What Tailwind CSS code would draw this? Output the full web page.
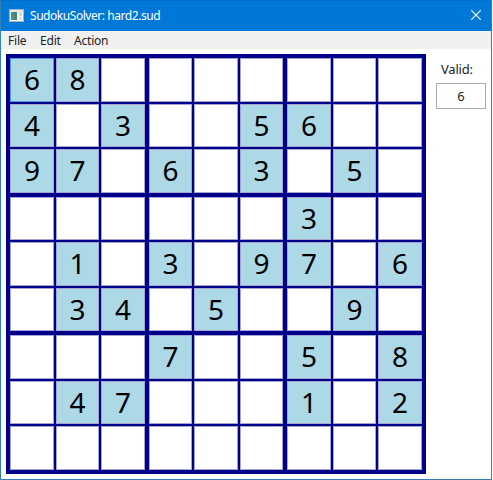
<!DOCTYPE html>
<html lang="en">
<head>
<meta charset="utf-8">
<title>SudokuSolver</title>
<script src="https://cdn.jsdelivr.net/npm/@tailwindcss/browser@4"></script>
</head>
<body class="bg-white font-['Noto_Sans','Open_Sans',sans-serif] text-[12px] text-[#222]">
<div class="w-[492px] h-[480px] border border-[#3480b4] border-t-[#0070c8] flex flex-col overflow-hidden">
  <header class="-mx-px h-[30px] shrink-0 bg-[#0078d7] flex items-center pl-[9px] pr-[11px] text-white">
    <svg class="w-[15px] h-[13px] mb-[2px]" viewBox="0 0 15 13">
      <rect width="15" height="13" fill="#a8b5bb"/>
      <rect x="1" y="1" width="13" height="11" fill="#f5f5f2"/>
      <rect x="1" y="1" width="13" height="1.5" fill="#dce4e6"/>
      <rect x="2" y="3" width="6" height="8" fill="#438477"/>
      <rect x="2" y="3" width="3" height="8" fill="#568b94"/>
      <rect x="10" y="3" width="3" height="4" fill="#d4d8d6"/>
      <rect x="10" y="8" width="3" height="3" fill="#e0e3df"/>
    </svg>
    <h1 class="ml-[6px] tracking-[-0.45px] whitespace-nowrap">SudokuSolver: hard2.sud</h1>
    <svg class="ml-auto mb-[2px] w-[10px] h-[10px]" viewBox="0 0 10 10" fill="none" stroke="white" stroke-width="1.1"><path d="M.3 .3 9.7 9.7M9.7 .3 .3 9.7"/></svg>
  </header>
  <nav class="h-[18px] shrink-0 bg-[#f0f0f0] flex items-center pl-[7px] pt-[2px] tracking-[-0.2px]">
    <span class="w-8">File</span><span class="w-[34px]">Edit</span><span>Action</span>
  </nav>
  <main class="flex pl-[5px] pt-[5px]">
    <div id="board" class="w-[420px] h-[420px] shrink-0 bg-[#00008b] border-4 border-[#00008b] grid grid-cols-[44px_2px_43px_2px_44px_4px_43px_2px_44px_2px_43px_4px_44px_2px_43px_2px_44px] grid-rows-[44px_2px_43px_2px_44px_4px_43px_2px_44px_2px_43px_4px_44px_2px_43px_2px_44px]"></div>
    <aside class="ml-[10px] w-[50px] flex flex-col">
      <label class="mt-[6px] pl-[5px] leading-[18px] text-[13px] tracking-[-0.2px]">Valid:</label>
      <div class="mt-[5px] h-[26px] border border-[#ababab] flex items-center justify-center pt-[2px] text-[13px]">6</div>
    </aside>
  </main>
</div>
<script>
const rows = ["68.......", "4.3..56..", "97.6.3.5.", "......3..", ".1.3.97.6", ".34.5..9.", "...7..5.8", ".47...1.2", "........."];
const board = document.getElementById("board");
rows.forEach((row, r) => [...row].forEach((v, c) => {
  const cell = document.createElement("div");
  cell.className = "flex items-center justify-center border pb-[2px] text-[28px] leading-none text-black " +
    (v === "." ? "bg-white " : "bg-[#add8e6] ") +
    (r === 0 && c === 0 ? "border-[#569de5]" : "border-[#a5a5cf]");
  cell.style.gridArea = `${2 * r + 1} / ${2 * c + 1}`;
  if (v !== ".") cell.textContent = v;
  board.append(cell);
}));
</script>
</body>
</html>
